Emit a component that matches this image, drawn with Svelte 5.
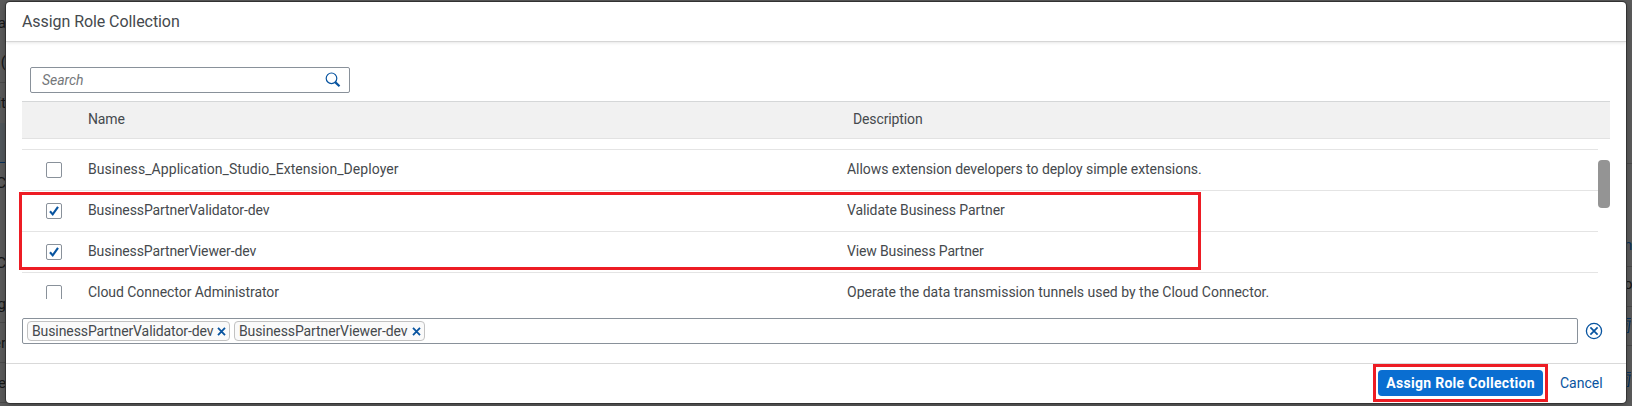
<script>
  const roles = [
    { name: 'Business_Application_Studio_Extension_Deployer', text: 'Allows extension developers to deploy simple extensions.', checked: false, ns: 0.065, ds: -0.05 },
    { name: 'BusinessPartnerValidator-dev', text: 'Validate Business Partner', checked: true, ns: -0.1, ds: -0.1 },
    { name: 'BusinessPartnerViewer-dev', text: 'View Business Partner', checked: true, ns: -0.11, ds: -0.15 },
    { name: 'Cloud Connector Administrator', text: 'Operate the data transmission tunnels used by the Cloud Connector.', checked: false, ns: -0.05, ds: 0 }
  ];
  const tokens = roles.filter((r) => r.checked);
  const left = [
    { t: 'na', y: 14 }, { t: '(', y: 53 }, { t: 'it', y: 94 }, { t: 'C', y: 174 },
    { t: 'C', y: 254 }, { t: 'g', y: 295 }, { t: 'er', y: 334 }, { t: 'e', y: 374 }
  ];
</script>

<div class="page">
  <div class="under" aria-hidden="true">
    <i class="band"></i>
    {#each [82, 322, 362, 402] as y}<i class="rule l" style="top:{y}px"></i>{/each}
    {#each [163, 266, 306, 345] as y}<i class="rule r" style="top:{y}px"></i>{/each}
    {#each left as g}<span class="l" style="top:{g.y}px">{g.t}</span>{/each}
    <span class="r link" style="top:236px">n</span>
    <span class="r" style="top:275px">o</span>
    {#each [318, 372] as y}
      <svg class="bin" style="top:{y}px" width="10" height="16" viewBox="0 0 10 16"><path d="M0 .5h5M0 3h5M4 3L2.5 14.5H0M1 5L0 12" /></svg>
    {/each}
  </div>

  <section class="dialog">
    <header>Assign Role Collection</header>
    <main>
      <div class="search">
        <span>Search</span>
        <svg width="16" height="16" viewBox="0 0 16 16"><circle cx="6.5" cy="6.3" r="5.3" /><path d="M10.2 10.1l4.3 4.1" /></svg>
      </div>
      <div class="thead"><span class="c1">Name</span><span>Description</span></div>
      <div class="scroll">
        <div class="rows">
          {#each roles as r}
            <div class="row">
              <span class="box">
                {#if r.checked}<svg width="14" height="14" viewBox="0 0 14 14"><path d="M3 7.3l2.7 3.1L11 2.8" /></svg>{/if}
              </span>
              <span class="txt" style="letter-spacing:{r.ns}px">{r.name}</span>
              <span class="txt" style="letter-spacing:{r.ds}px">{r.text}</span>
            </div>
          {/each}
        </div>
        <div class="thumb"></div>
      </div>
      <div class="selection">
        <div class="field">
          {#each tokens as t}
            <span class="token"><b>{t.name}</b><svg width="9" height="9" viewBox="0 0 9 9"><path d="M1 .8l7 7.4M8 .8L1 8.2" /></svg></span>
          {/each}
        </div>
        <svg class="clear" width="18" height="18" viewBox="0 0 18 18"><circle cx="9" cy="9" r="7.6" /><path d="M5.4 5.4l7.2 7.2M12.6 5.4l-7.2 7.2" /></svg>
      </div>
    </main>
    <footer>
      <button class="primary">Assign Role Collection</button>
      <button class="cancel">Cancel</button>
    </footer>
    <div class="mark rowsmark"></div>
    <div class="mark btnmark"></div>
  </section>
</div>

<style>
  :global(body) { margin: 0; overflow: hidden; }
  * { box-sizing: border-box; }
  .page {
    position: relative; width: 1632px; height: 406px; padding: 2px 6px 3px; overflow: hidden;
    background: #5b5b5b; color: #45494d; font: 14px/18px Roboto, sans-serif;
  }
  .under { position: absolute; inset: 0; color: #151617; font-size: 15px; }
  .under span { position: absolute; }
  .under span.l { right: 1626px; }
  .under span.r { left: 1624px; }
  .under .link { color: #073259; }
  .rule { position: absolute; height: 1px; width: 6px; background: #4b4b4b; }
  .rule.l { left: 0; }
  .rule.r { right: 0; }
  .band { position: absolute; left: 0; top: 123px; width: 6px; height: 40px; background: #52585c; border-bottom: 1px solid #09305a; }
  .bin { position: absolute; left: 1626px; fill: none; stroke: #08335c; stroke-width: 1.2; }
  .dialog {
    position: relative; display: flex; flex-direction: column; width: 1620px; height: 401px;
    background: #fff; border-radius: 4px; box-shadow: 0 0 0 1px #333, 0 2px 8px rgba(0, 0, 0, .3);
  }
  header {
    flex: none; height: 40px; padding: 0 16px; font-size: 16px; line-height: 40px; letter-spacing: -.07px;
    border-bottom: 1px solid #d6d6d6; box-shadow: 0 1px 3px rgba(0, 0, 0, .1);
  }
  main { flex: 1; display: flex; flex-direction: column; padding: 25px 16px 0; }
  .search {
    flex: none; display: flex; align-items: center; justify-content: space-between; width: 320px; height: 26px;
    margin-left: 8px; padding: 0 8px 0 11px; border: 1px solid #89919a; border-radius: 2px;
    color: #74777a; font-style: italic; letter-spacing: -.05px;
  }
  svg { fill: none; stroke: #0854a0; }
  .search circle { stroke-width: 1.2; }
  .search path { stroke-width: 2.2; }
  .thead {
    flex: none; display: flex; align-items: center; height: 38px; margin-top: 8px; padding: 0 0 2px 66px;
    background: #f1f1f1; border-top: 1px solid #d5d7d8; border-bottom: 1px solid #e2e2e2; letter-spacing: -.12px;
  }
  .c1 { width: 765px; }
  .scroll { flex: none; display: flex; height: 160px; padding-top: 10px; overflow: hidden; }
  .rows { width: 1576px; }
  .row { display: grid; grid-template-columns: 66px 759px 1fr; align-items: center; height: 41px; border-top: 1px solid #e4e4e4; white-space: nowrap; }
  .txt { padding-bottom: 2px; }
  .box { width: 16px; height: 16px; margin-left: 24px; border: 1px solid #89919a; border-radius: 2px; }
  .box svg { display: block; stroke-width: 2.1; }
  .thumb { width: 12px; height: 48px; margin-top: 11px; border-radius: 4px; background: #949494; }
  .selection { display: flex; align-items: center; gap: 7px; height: 26px; margin-top: 19px; }
  .field { display: flex; align-items: center; gap: 4px; width: 1556px; height: 26px; padding-left: 4px; border: 1px solid #89919a; border-radius: 2px; }
  .token { display: flex; align-items: center; justify-content: space-between; width: 203px; height: 20px; padding: 0 3px 0 4px; border: 1px solid #c2c2c2; border-radius: 4px; background: #fafafa; white-space: nowrap; }
  .token + .token { width: 191px; }
  .token b { font-weight: 400; letter-spacing: -.1px; }
  .token svg { flex: none; stroke-width: 1.8; }
  .clear { stroke-width: 1.3; }
  .clear path { stroke-width: 1.7; }
  footer { flex: none; display: flex; justify-content: flex-end; align-items: center; gap: 17px; height: 40px; padding: 0 24px 1px 0; border-top: 1px solid #d9d9d9; }
  button { height: 26px; padding: 0; border: 0; background: none; font: inherit; white-space: nowrap; }
  .primary { width: 165px; border-radius: 4px; background: #0a6ed1; color: #fff; font-weight: 700; letter-spacing: .3px; }
  .cancel { width: 42px; color: #0854a0; }
  .mark { position: absolute; border: 3px solid #ed1c24; pointer-events: none; }
  .rowsmark { left: 13px; top: 190px; width: 1182px; height: 78px; }
  .btnmark { left: 1367px; top: 362px; width: 175px; height: 38px; }
</style>
